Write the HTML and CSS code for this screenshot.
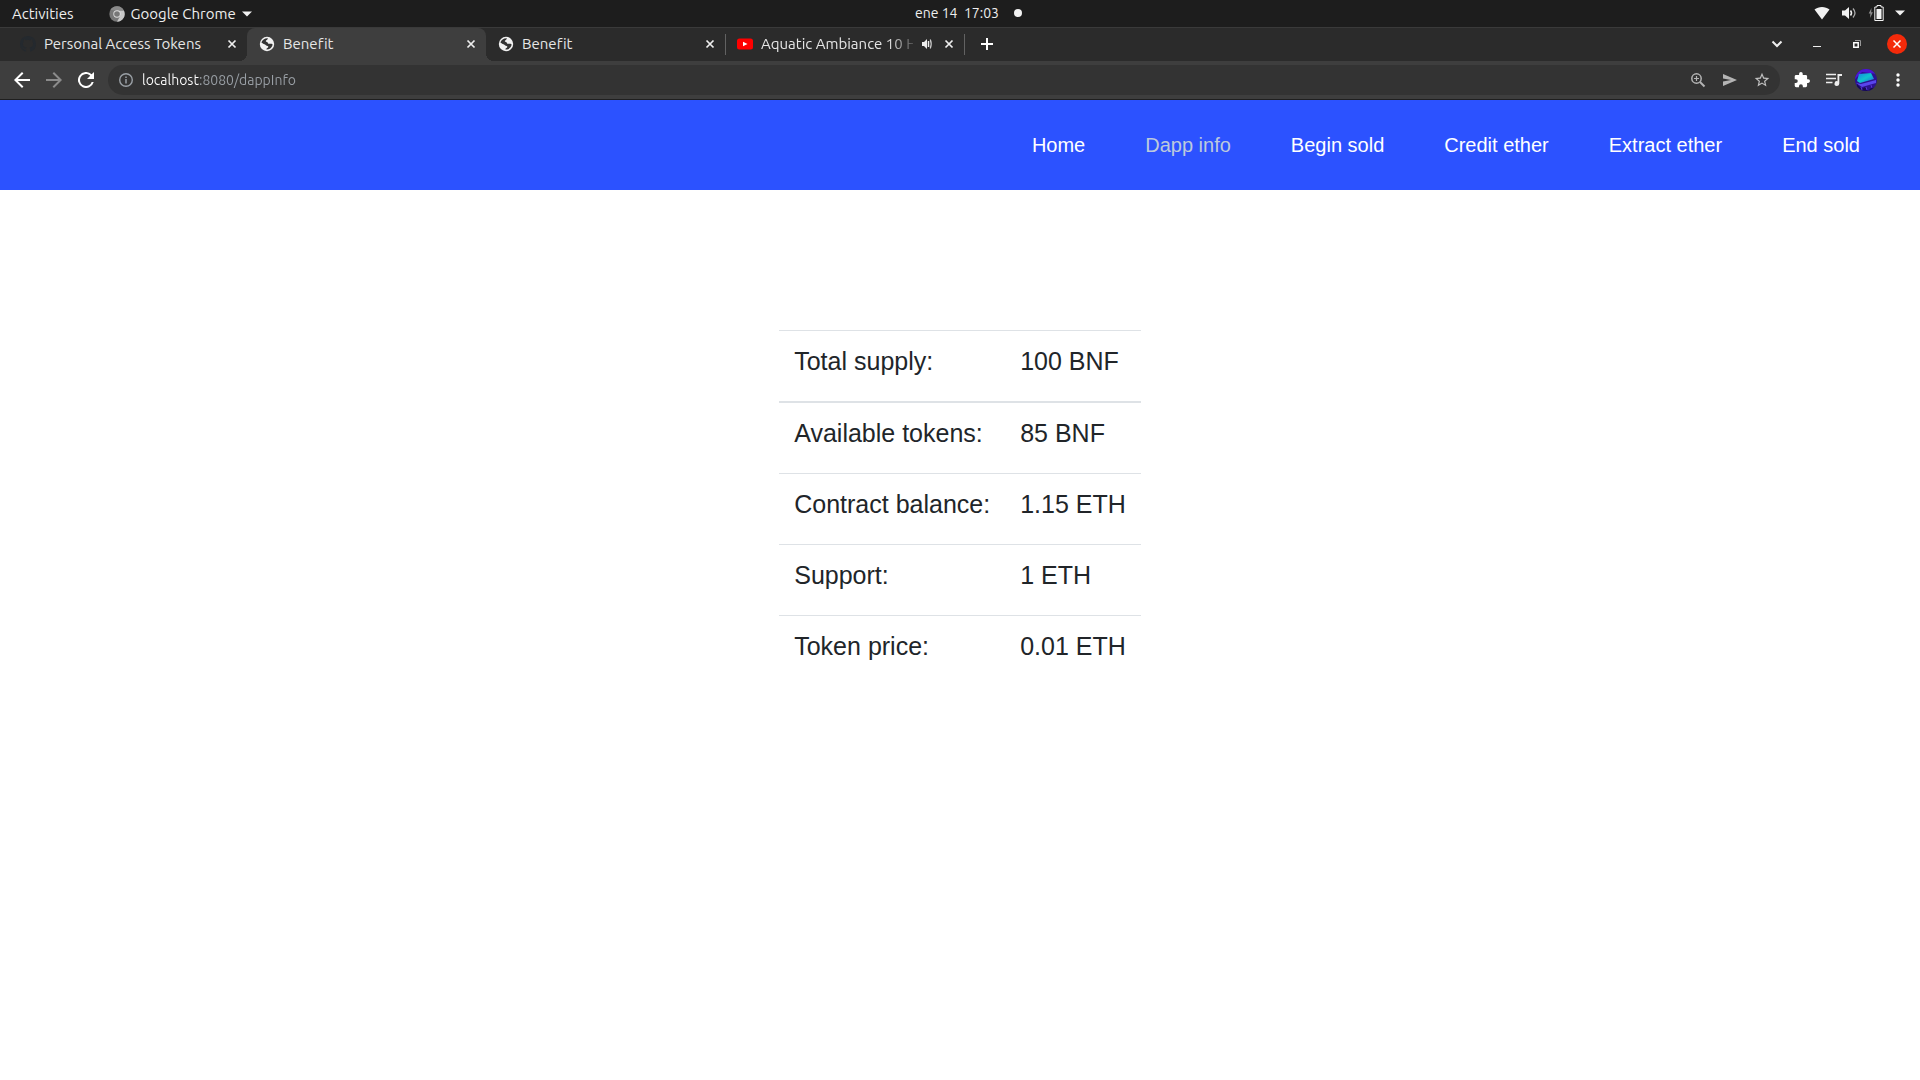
FILE: index.html
```html
<!DOCTYPE html>
<html lang="en">
<head>
<meta charset="utf-8">
<title>Benefit</title>
<link rel="stylesheet" href="styles.css">
</head>
<body>
<svg class="sprite" aria-hidden="true">
  <symbol id="globe" viewBox="0 0 16 16"><circle cx="8" cy="8" r="7.200" fill="#f1f1f1"/><path d="M9 2.300c-.6.700-.3 1.300-1.100 1.700-.9.400-1.400.9-.9 1.600.4.500 1.200.3 1.600.8.500.6.300 1.200 1.200 1.400 1.100.2 2.100-.5 3.400.3.500.4.400 1.100 0 2-.8 1.900-2.500 3.400-5.700 3.500-.3-.8.200-1.400.9-1.700.8-.3 1.100-.9.700-1.600-.5-.9-1.900-.6-2.500-1.400-.5-.8-1.800-.9-2.700-1.500L2.400 6.500C3.300 3.900 5.700 2.100 9 2.300z" fill="#333"/><path d="M3.600 8.600c1.500.2 1.700 1.400 3.100 1.700l-.4 2.400C4.800 11.800 3.900 10.400 3.600 8.600z" fill="#f1f1f1"/></symbol>
  <symbol id="cross" viewBox="0 0 16 16"><path d="M4.500 4.500l7 7m0-7l-7 7" fill="none" stroke="currentColor" stroke-width="1.700"/></symbol>
</svg>

<header class="system-bar">
  <div class="system-left">
    <button class="system-button">Activities</button>
    <button class="system-button app-menu">
      <svg width="16" height="16" viewBox="0 0 16 16"><circle cx="8" cy="8" r="7.700" fill="#777"/><path d="M8 4.600h6.900A7.700 7.700 0 0 1 8 15.700l3.300-5.900z" fill="#c8c8c8"/><path d="M1.400 4A7.700 7.700 0 0 1 14.900 4.600H8z" fill="#8a8a8a"/><circle cx="8" cy="8" r="3.700" fill="#ddd"/><circle cx="8" cy="8" r="2.800" fill="#777"/></svg>
      <span>Google Chrome</span>
      <svg width="10" height="6" viewBox="0 0 10 6"><path d="M0 .5h10L5 5.500z" fill="#f2f2f2"/></svg>
    </button>
  </div>
  <button class="system-button clock">ene 14&nbsp; 17:03<span class="notice-dot"></span></button>
  <button class="system-button status" aria-label="System status">
    <svg width="16" height="16" viewBox="0 0 16 16"><path d="M.5 4.500C4.500 1 11.500 1 15.500 4.500L8 14.500z" fill="#f2f2f2"/></svg>
    <svg width="16" height="16" viewBox="0 0 16 16"><path d="M1 5.500h3L8 2v12l-4-3.500H1z" fill="#f2f2f2"/><path d="M9.500 5.500q2 2.500 0 5" fill="none" stroke="#f2f2f2" stroke-width="1.500"/><path d="M12 3.500q4 4.500 0 9" fill="none" stroke="#aaa" stroke-width="1.300"/></svg>
    <svg width="16" height="16" viewBox="0 0 16 16"><path d="M3.500 3L.7 8.500h1.700L2 13l2.900-5.700H3.200z" fill="#8e8e8e"/><path d="M9 .5h4v1.500h2.200V15.500H6.800V2H9z" fill="none" stroke="#f2f2f2"/><path d="M8.500 4h5v10h-5z" fill="#f2f2f2"/></svg>
    <svg width="10" height="6" viewBox="0 0 10 6"><path d="M0 .5h10L5 5.500z" fill="#f2f2f2"/></svg>
  </button>
</header>

<div class="tab-strip">
  <div class="tabs">
    <div class="tab">
      <svg width="16" height="16" viewBox="0 0 16 16"><path fill="#24292e" d="M8 0C3.580 0 0 3.580 0 8c0 3.540 2.290 6.530 5.470 7.590.4.070.55-.17.55-.38v-1.490c-2.230.48-2.700-.95-2.700-.95-.36-.92-.89-1.170-.89-1.170-.73-.5.050-.49.050-.49.800.060 1.230.830 1.230.830.710 1.220 1.870.87 2.330.66.070-.52.280-.87.510-1.070-1.780-.2-3.640-.89-3.640-3.950 0-.87.310-1.590.820-2.150-.08-.2-.36-1.020.08-2.120 0 0 .67-.21 2.200.82a7.600 7.600 0 0 1 4 0c1.530-1.040 2.200-.82 2.200-.82.440 1.100.160 1.920.080 2.120.510.560.820 1.270.820 2.150 0 3.070-1.870 3.750-3.650 3.950.290.250.540.730.540 1.480v2.200c0 .21.150.46.550.38A8 8 0 0 0 16 8c0-4.420-3.580-8-8-8z"/></svg>
      <span class="tab-title">Personal Access Tokens</span>
      <button class="tab-close" aria-label="Close tab"><svg width="16" height="16"><use href="#cross"/></svg></button>
    </div>
    <div class="tab active">
      <svg width="16" height="16"><use href="#globe"/></svg>
      <span class="tab-title">Benefit</span>
      <button class="tab-close" aria-label="Close tab"><svg width="16" height="16"><use href="#cross"/></svg></button>
    </div>
    <div class="tab">
      <svg width="16" height="16"><use href="#globe"/></svg>
      <span class="tab-title">Benefit</span>
      <button class="tab-close" aria-label="Close tab"><svg width="16" height="16"><use href="#cross"/></svg></button>
    </div>
    <div class="tab divided">
      <svg width="16" height="16" viewBox="0 0 16 16"><rect x="0" y="2.500" width="16" height="11" rx="2.500" fill="#f00"/><path d="M6 5.700v4.600L10.500 8z" fill="#fff"/></svg>
      <span class="tab-title fading">Aquatic Ambiance 10 H</span>
      <svg width="12" height="12" viewBox="0 0 12 12"><path d="M1 4h2l3-3v10L3 8H1z" fill="#eee"/><path d="M7.500 3v6" stroke="#eee" stroke-width="1.500"/><path d="M9.300 1.500q1.800 4.500 0 9" fill="none" stroke="#ccc" stroke-width="1.200"/></svg>
      <button class="tab-close" aria-label="Close tab"><svg width="16" height="16"><use href="#cross"/></svg></button>
    </div>
    <button class="new-tab" aria-label="New tab"><svg width="14" height="14" viewBox="0 0 14 14"><path d="M7 1v12M1 7h12" stroke="#fff" stroke-width="2"/></svg></button>
  </div>
  <div class="window-controls">
    <button aria-label="Search tabs"><svg width="20" height="20" viewBox="0 0 20 20"><path d="M5.500 7.500L10 12l4.500-4.500" fill="none" stroke="#eee" stroke-width="2"/></svg></button>
    <button aria-label="Minimize"><svg width="20" height="20" viewBox="0 0 20 20"><path d="M6 12.500h8" stroke="#eee"/></svg></button>
    <button aria-label="Restore"><svg width="20" height="20" viewBox="0 0 20 20"><path d="M8 6.500h5.500V12" fill="none" stroke="#999"/><path d="M6.800 8.800h4.400v4.400H6.800z" fill="none" stroke="#fff" stroke-width="1.500"/></svg></button>
    <button aria-label="Close window"><svg width="20" height="20" viewBox="0 0 20 20"><circle cx="10" cy="10" r="10" fill="#f42a0a"/><path d="M6.500 6.500l7 7m0-7l-7 7" stroke="#fff" stroke-width="1.500"/></svg></button>
  </div>
</div>

<div class="toolbar">
  <div class="history">
    <button aria-label="Back"><svg width="16" height="16" viewBox="4 4 16 16"><path d="M20 11H7.830l5.590-5.590L12 4l-8 8 8 8 1.410-1.410L7.830 13H20z" fill="#fff"/></svg></button>
    <button aria-label="Forward"><svg width="16" height="16" viewBox="4 4 16 16"><path d="M12 4l-1.410 1.410L16.170 11H4v2h12.170l-5.580 5.590L12 20l8-8z" fill="#8b8b8b"/></svg></button>
    <button aria-label="Reload"><svg width="16" height="16" viewBox="4 4 16 16"><path d="M17.650 6.350A8 8 0 1 0 19.730 14h-2.080A6 6 0 1 1 12 6c1.660 0 3.140.69 4.220 1.780L13 11h7V4z" fill="#fff"/></svg></button>
  </div>
  <div class="address-box">
    <button aria-label="Site information"><svg width="16" height="16" viewBox="0 0 16 16"><circle cx="8" cy="8" r="6.300" fill="none" stroke="#9aa0a6" stroke-width="1.400"/><path d="M8 7v4.500M8 4.500V6" stroke="#9aa0a6" stroke-width="1.500"/></svg></button>
    <input class="address" type="text" aria-label="Address" value="localhost:8080/dappInfo">
    <div class="address-actions">
      <button aria-label="Zoom"><svg width="16" height="16" viewBox="0 0 16 16"><circle cx="6.500" cy="6.500" r="4.700" fill="none" stroke="#b4b4b4" stroke-width="1.500"/><path d="M10 10l4.500 4.500" stroke="#b4b4b4" stroke-width="2"/><path d="M6.500 4v5M4 6.500h5" stroke="#b4b4b4" stroke-width="1.200"/></svg></button>
      <button aria-label="Share"><svg width="16" height="16" viewBox="0 0 16 16"><path d="M1 2l14 6-14 6V9.500L9 8 1 6.500z" fill="#b4b4b4"/></svg></button>
      <button aria-label="Bookmark"><svg width="16" height="16" viewBox="1 1 22 22"><path d="M22 9.240l-7.190-.62L12 2 9.190 8.630 2 9.240l5.460 4.730L5.820 21 12 17.270 18.180 21l-1.630-7.030zM12 15.400l-3.760 2.270 1-4.280-3.320-2.880 4.380-.38L12 6.100l1.710 4.040 4.380.38-3.320 2.880 1 4.280z" fill="#c0c0c0"/></svg></button>
    </div>
  </div>
  <div class="browser-actions">
    <button aria-label="Extensions"><svg width="16" height="16" viewBox="1 1 22 22"><path d="M20.500 11H19V7a2 2 0 0 0-2-2h-4V3.500a2.500 2.500 0 0 0-5 0V5H4a2 2 0 0 0-2 2v3.800h1.500a2.700 2.700 0 0 1 0 5.400H2V20a2 2 0 0 0 2 2h3.800v-1.500a2.700 2.700 0 0 1 5.400 0V22H17a2 2 0 0 0 2-2v-4h1.500a2.500 2.500 0 0 0 0-5z" fill="#fff"/></svg></button>
    <button aria-label="Media"><svg width="16" height="16" viewBox="0 0 16 16"><path d="M0 2.500h10M0 6.500h10M0 10.500h6.500" stroke="#eee" stroke-width="1.600"/><path d="M11.500 2H16v2h-2.700v7.500a2.400 2.400 0 1 1-1.800-2.300z" fill="#eee"/></svg></button>
    <button aria-label="Profile"><svg width="22" height="22" viewBox="0 0 22 22"><defs><clipPath id="avatar"><circle cx="11" cy="11" r="11"/></clipPath><linearGradient id="screen" x2="1" y2="1"><stop stop-color="#187fe8"/><stop offset=".5" stop-color="#10c4cc"/><stop offset="1" stop-color="#245ee0"/></linearGradient></defs><g clip-path="url(#avatar)"><path fill="#2c138f" d="M0 0h22v22H0z"/><path d="M0 0h22v5L7 3 0 10z" fill="#4d16d2"/><path d="M4 5l12-1 3 6-14 4-3-2z" fill="url(#screen)"/><path d="M1 14l5 1 15-4v3L7 18z" fill="#5a45ed"/><path d="M2 15l5 5 3-2 3 4 4-4 4 2v3H2z" fill="#160b52"/><path d="M6 18l1 3m4-3l1 3m4-5l1 3" stroke="#5a31d5"/></g></svg></button>
    <button aria-label="Menu"><svg width="16" height="16" viewBox="0 0 16 16" fill="#fff"><circle cx="8" cy="3" r="1.700"/><circle cx="8" cy="8" r="1.700"/><circle cx="8" cy="13" r="1.700"/></svg></button>
  </div>
</div>

<nav class="site-nav">
  <a href="#">Home</a>
  <a href="#" class="current" aria-current="page">Dapp info</a>
  <a href="#">Begin sold</a>
  <a href="#">Credit ether</a>
  <a href="#">Extract ether</a>
  <a href="#">End sold</a>
</nav>

<main class="content">
  <table class="info-table">
    <thead>
      <tr><th scope="row"><p>Total supply:</p></th><td><p>100 BNF</p></td></tr>
    </thead>
    <tbody>
      <tr><th scope="row"><p>Available tokens:</p></th><td><p>85 BNF</p></td></tr>
      <tr><th scope="row"><p>Contract balance:</p></th><td><p>1.15 ETH</p></td></tr>
      <tr><th scope="row"><p>Support:</p></th><td><p>1 ETH</p></td></tr>
      <tr><th scope="row"><p>Token price:</p></th><td><p>0.01 ETH</p></td></tr>
    </tbody>
  </table>
</main>
</body>
</html>
```

FILE: styles.css
```css
* {
  box-sizing: border-box;
}

body {
  margin: 0;
  background: #fff;
  color: #212529;
  font-family: "Liberation Sans", Arial, sans-serif;
}

button {
  display: flex;
  align-items: center;
  justify-content: center;
  padding: 0;
  border: 0;
  background: none;
  color: #eee;
  font: inherit;
}

svg {
  display: block;
  flex: none;
}

.sprite {
  position: absolute;
  width: 0;
  height: 0;
}

/* Desktop bar */
.system-bar,
.tab-strip,
.toolbar {
  font-family: Ubuntu, "Noto Sans", sans-serif;
  font-size: 15px;
  font-variant-ligatures: none;
  line-height: 20px;
}

.system-bar {
  display: grid;
  grid-template-columns: 1fr auto 1fr;
  align-items: center;
  height: 27px;
  padding: 0 15px 1px 12px;
  background: #1d1d1d;
}

.system-left {
  display: flex;
  gap: 35px;
  padding-top: 2px;
}

.app-menu {
  gap: 6px;
}

.clock {
  gap: 15px;
  padding-left: 20px;
  font-size: 14px;
}

.notice-dot {
  width: 8px;
  height: 8px;
  border-radius: 50%;
  background: #f2f2f2;
}

.status {
  justify-self: end;
  gap: 11px;
}

/* Tabs */
.tab-strip {
  display: flex;
  justify-content: space-between;
  height: 34px;
  padding: 0 13px 0 8px;
  border-top: 1px solid #3a3a3a;
  background: #2b2b2b;
}

.tabs {
  display: flex;
}

.tab {
  position: relative;
  display: flex;
  align-items: center;
  gap: 8px;
  width: 239px;
  padding: 0 7px 1px 12px;
  color: #e6e6e6;
}

.tab.active {
  border-radius: 8px 8px 0 0;
  background: #3e3e3e;
}

.tab.active::before,
.tab.active::after {
  content: "";
  position: absolute;
  bottom: 0;
  width: 8px;
  height: 8px;
}

.tab.active::before {
  left: -8px;
  background: radial-gradient(circle at 0 0, transparent 8px, #3e3e3e 8px);
}

.tab.active::after {
  right: -8px;
  background: radial-gradient(circle at 100% 0, transparent 8px, #3e3e3e 8px);
}

.tab.divided::before,
.tab.divided::after {
  content: "";
  position: absolute;
  top: 6px;
  left: 0;
  width: 1px;
  height: 21px;
  background: #626262;
}

.tab.divided::after {
  left: 100%;
}

.tab-title {
  flex: 1;
  min-width: 0;
  overflow: hidden;
  white-space: nowrap;
}

.tab-title.fading {
  -webkit-mask-image: linear-gradient(to right, #000 84%, rgba(0, 0, 0, 0.2));
  mask-image: linear-gradient(to right, #000 84%, rgba(0, 0, 0, 0.2));
}

.tab-close {
  width: 16px;
  height: 16px;
}

.new-tab {
  width: 46px;
  padding-bottom: 1px;
}

.window-controls {
  display: flex;
  gap: 20px;
  padding-bottom: 1px;
}

/* Toolbar */
.toolbar {
  display: flex;
  align-items: center;
  gap: 14px;
  height: 39px;
  padding: 0 14px;
  border-bottom: 1px solid #1f1f1f;
  background: #3e3e3e;
  font-size: 14px;
}

.history,
.address-actions,
.browser-actions {
  display: flex;
  align-items: center;
  gap: 16px;
}

.address-box {
  display: flex;
  flex: 1;
  align-items: center;
  gap: 8px;
  height: 30px;
  padding: 0 10px;
  border-radius: 15px;
  background: #333;
}

.address {
  flex: 1;
  min-width: 0;
  padding: 0;
  border: 0;
  outline: 0;
  background: linear-gradient(to right, #fff 58px, #9aa0a6 58px);
  -webkit-background-clip: text;
  background-clip: text;
  color: transparent;
  font: inherit;
}

.browser-actions button {
  width: 16px;
}

/* Site */
.site-nav {
  display: flex;
  align-items: center;
  justify-content: flex-end;
  height: 90px;
  padding: 0 30px;
  background: #2c52ff;
  font-size: 20px;
  line-height: 30px;
}

.site-nav a {
  padding: 0 30px;
  color: #fff;
  text-decoration: none;
}

.site-nav .current {
  color: #bcc9dc;
}

.content {
  display: flex;
  justify-content: center;
  padding: 140px 20px;
}

.info-table {
  border-spacing: 0;
  font-size: 25px;
  line-height: 30px;
}

.info-table th,
.info-table td {
  padding: 15px;
  border-top: 1px solid #dee2e6;
  font-weight: 400;
  text-align: left;
}

.info-table thead th,
.info-table thead td {
  border-bottom: 2px solid #dee2e6;
}

.info-table tbody tr:first-child th,
.info-table tbody tr:first-child td {
  border-top: 0;
}

.info-table p {
  margin: 0 0 10px;
}
```
